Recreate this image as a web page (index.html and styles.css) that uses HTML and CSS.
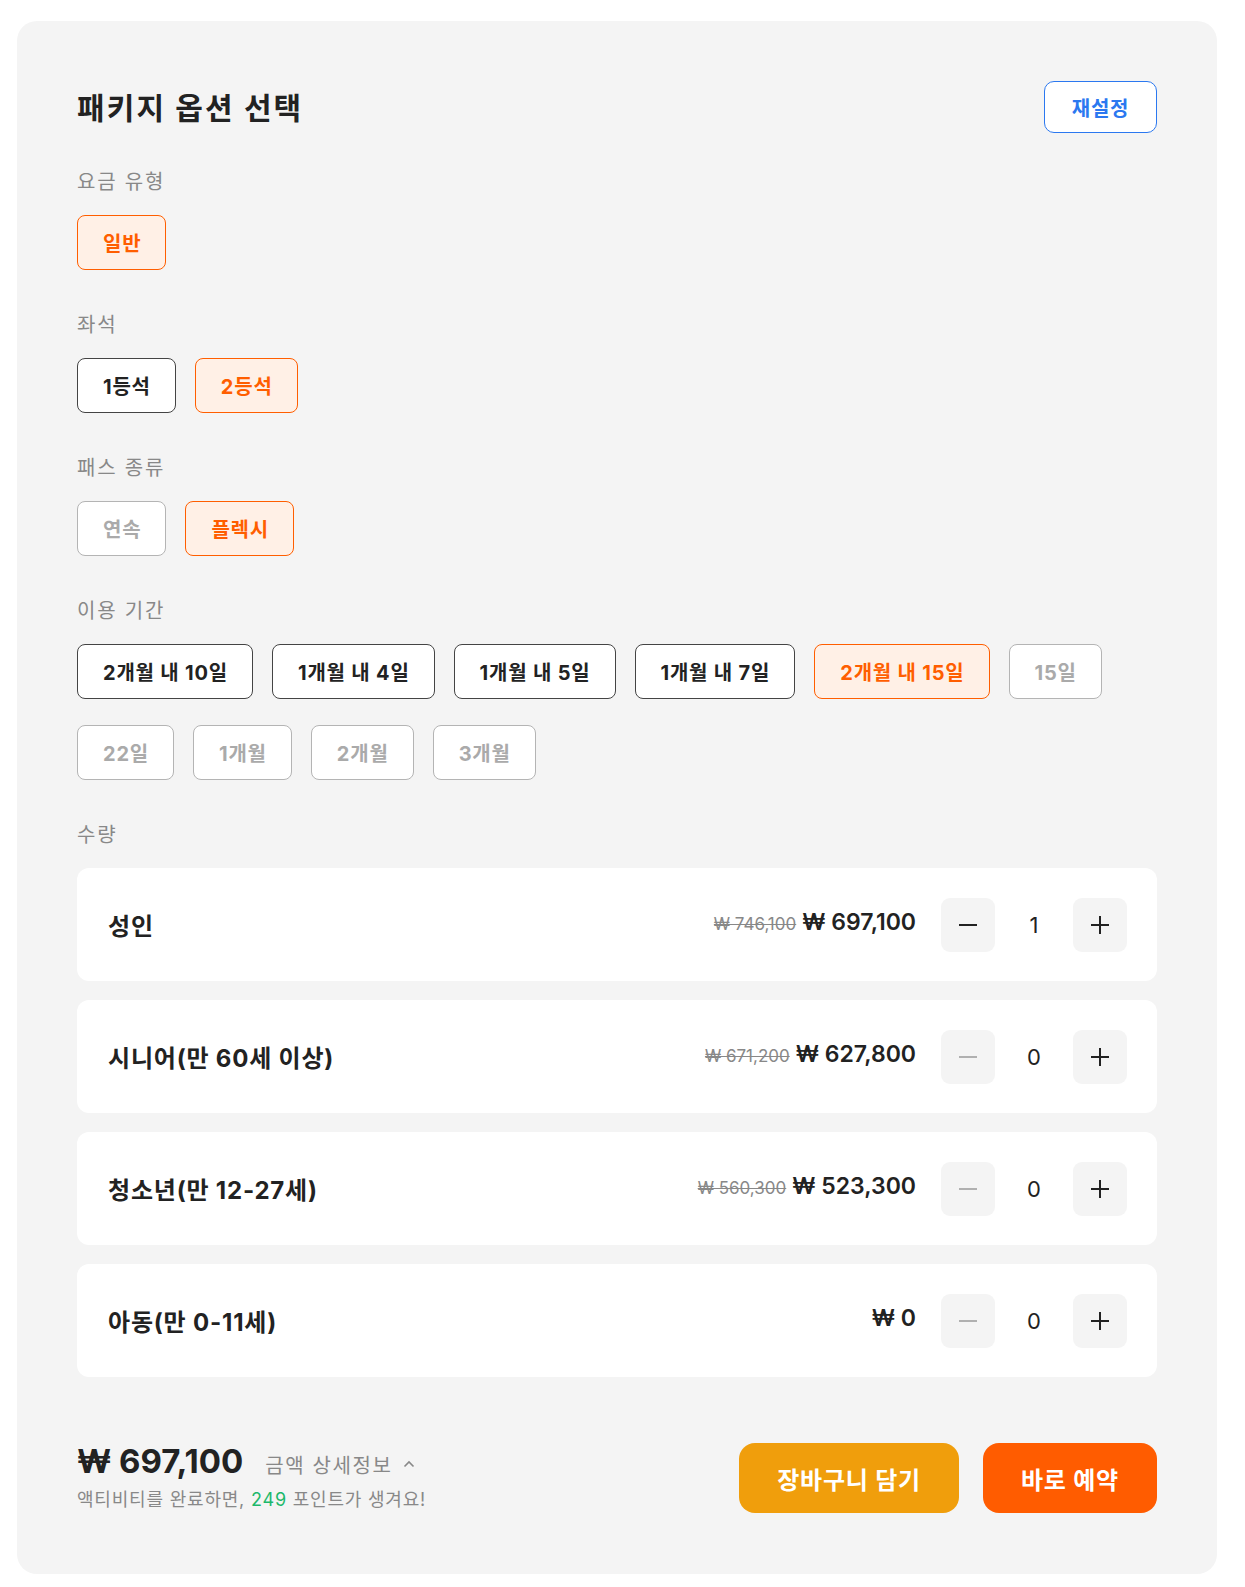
FILE: index.html
```html
<!DOCTYPE html>
<html lang="ko">
<head>
  <meta charset="UTF-8">
  <title>패키지 옵션 선택</title>
  <link rel="stylesheet" href="styles.css">
</head>
<body>
  <div class="panel">
    <div class="panel-head">
      <h2 class="panel-title">패키지 옵션 선택</h2>
      <button class="reset-btn">재설정</button>
    </div>

    <div class="option-group">
      <div class="option-label">요금 유형</div>
      <div class="option-list">
        <button class="chip is-active">일반</button>
      </div>
    </div>

    <div class="option-group">
      <div class="option-label">좌석</div>
      <div class="option-list">
        <button class="chip">1등석</button>
        <button class="chip is-active">2등석</button>
      </div>
    </div>

    <div class="option-group">
      <div class="option-label">패스 종류</div>
      <div class="option-list">
        <button class="chip is-disabled">연속</button>
        <button class="chip is-active">플렉시</button>
      </div>
    </div>

    <div class="option-group">
      <div class="option-label">이용 기간</div>
      <div class="option-list">
        <button class="chip">2개월 내 10일</button>
        <button class="chip">1개월 내 4일</button>
        <button class="chip">1개월 내 5일</button>
        <button class="chip">1개월 내 7일</button>
        <button class="chip is-active">2개월 내 15일</button>
        <button class="chip is-disabled">15일</button>
        <button class="chip is-disabled">22일</button>
        <button class="chip is-disabled">1개월</button>
        <button class="chip is-disabled">2개월</button>
        <button class="chip is-disabled">3개월</button>
      </div>
    </div>

    <div class="option-group">
      <div class="option-label">수량</div>
      <div class="qty-list">
        <div class="qty-row">
          <div class="qty-name">성인</div>
          <div class="qty-price">
            <span class="price-old">₩ 746,100</span>
            <span class="price-now">₩ 697,100</span>
          </div>
          <div class="stepper">
            <button class="step-btn"><span class="minus"></span></button>
            <span class="step-count">1</span>
            <button class="step-btn"><span class="plus"></span></button>
          </div>
        </div>
        <div class="qty-row">
          <div class="qty-name">시니어(만 60세 이상)</div>
          <div class="qty-price">
            <span class="price-old">₩ 671,200</span>
            <span class="price-now">₩ 627,800</span>
          </div>
          <div class="stepper">
            <button class="step-btn is-off"><span class="minus"></span></button>
            <span class="step-count">0</span>
            <button class="step-btn"><span class="plus"></span></button>
          </div>
        </div>
        <div class="qty-row">
          <div class="qty-name">청소년(만 12-27세)</div>
          <div class="qty-price">
            <span class="price-old">₩ 560,300</span>
            <span class="price-now">₩ 523,300</span>
          </div>
          <div class="stepper">
            <button class="step-btn is-off"><span class="minus"></span></button>
            <span class="step-count">0</span>
            <button class="step-btn"><span class="plus"></span></button>
          </div>
        </div>
        <div class="qty-row">
          <div class="qty-name">아동(만 0-11세)</div>
          <div class="qty-price">
            <span class="price-now">₩ 0</span>
          </div>
          <div class="stepper">
            <button class="step-btn is-off"><span class="minus"></span></button>
            <span class="step-count">0</span>
            <button class="step-btn"><span class="plus"></span></button>
          </div>
        </div>
      </div>
    </div>

    <div class="panel-foot">
      <div class="total">
        <div class="total-line">
          <span class="total-price">₩ 697,100</span>
          <span class="total-detail">금액 상세정보
            <svg class="chevron" viewBox="0 0 14 14" fill="none" stroke="currentColor" stroke-width="1.6">
              <path d="M2.5 9.5L7 5l4.5 4.5"/>
            </svg>
          </span>
        </div>
        <div class="total-note">액티비티를 완료하면, <span class="point">249</span> 포인트가 생겨요!</div>
      </div>
      <div class="actions">
        <button class="cart-btn">장바구니 담기</button>
        <button class="book-btn">바로 예약</button>
      </div>
    </div>
  </div>
</body>
</html>
```

FILE: styles.css
```css
body {
  margin: 0;
  padding: 21px 0 14px 17px;
  background: #fff;
  font-family: "Inter", "Noto Sans CJK KR", sans-serif;
  color: #222;
  letter-spacing: 0.05em;
}
button {
  font-family: inherit;
  letter-spacing: inherit;
  cursor: pointer;
}
.panel {
  width: 1200px;
  box-sizing: border-box;
  padding: 60px 60px 61px;
  background: #f4f4f4;
  border-radius: 20px;
}
.panel-head {
  display: flex;
  justify-content: space-between;
  align-items: center;
  margin-bottom: 34px;
}
.panel-title {
  margin: 0;
  margin-top: -2px;
  font-size: 30px;
  font-weight: 700;
  letter-spacing: 0.07em;
  color: #222;
}
.reset-btn {
  width: 113px;
  height: 52px;
  background: #fff;
  border: 1px solid #2b78f0;
  border-radius: 10px;
  color: #2b78f0;
  font-size: 20px;
  font-weight: 700;
}
.option-group {
  margin-bottom: 40px;
}
.option-label {
  font-size: 20px;
  line-height: 30px;
  letter-spacing: 0.09em;
  color: #888;
  margin-bottom: 18px;
}
.option-list {
  display: flex;
  flex-wrap: wrap;
  gap: 26px 19px;
}
.chip {
  height: 55px;
  padding: 0 24px 0 25px;
  background: #fff;
  border: 1px solid #444;
  border-radius: 8px;
  font-size: 20px;
  font-weight: 700;
  color: #222;
}
.chip.is-active {
  background: #fff0e6;
  border-color: #ff5e00;
  color: #ff5e00;
}
.chip.is-disabled {
  border-color: #b4b4b4;
  color: #aaa;
}
.qty-list {
  display: flex;
  flex-direction: column;
  gap: 19px;
}
.qty-row {
  display: flex;
  align-items: center;
  height: 113px;
  padding: 0 30px 0 31px;
  background: #fff;
  border-radius: 12px;
}
.qty-name {
  flex: 1;
  font-size: 24px;
  font-weight: 700;
  color: #222;
}
.qty-price {
  display: flex;
  align-items: baseline;
  gap: 6px;
  margin-right: 25px;
  margin-top: -6px;
  letter-spacing: 0;
}
.price-old {
  font-size: 17px;
  color: #888;
  text-decoration: line-through;
}
.price-now {
  font-size: 23px;
  font-weight: 600;
  color: #222;
}
.stepper {
  display: flex;
  align-items: center;
}
.step-btn {
  width: 54px;
  height: 54px;
  display: flex;
  align-items: center;
  justify-content: center;
  padding: 0;
  background: #f4f4f4;
  border: none;
  border-radius: 9px;
  color: #222;
}
.step-btn.is-off {
  color: #b0b0b0;
}
.minus {
  width: 18px;
  height: 2px;
  background: currentColor;
}
.plus {
  position: relative;
  width: 18px;
  height: 2px;
  background: currentColor;
}
.plus::after {
  content: "";
  position: absolute;
  left: 8px;
  top: -8px;
  width: 2px;
  height: 18px;
  background: currentColor;
}
.step-count {
  width: 78px;
  text-align: center;
  font-size: 22px;
  letter-spacing: 0;
  color: #222;
}
.panel-foot {
  display: flex;
  justify-content: space-between;
  align-items: flex-end;
  margin-top: 62px;
}
.total-line {
  display: flex;
  align-items: center;
  gap: 22px;
}
.total-price {
  font-size: 33px;
  font-weight: 700;
  letter-spacing: 0;
  color: #222;
  line-height: 44px;
}
.total-detail {
  display: flex;
  align-items: center;
  gap: 10px;
  font-size: 20px;
  letter-spacing: 0.08em;
  color: #888;
  margin-top: 6px;
}
.chevron {
  width: 14px;
  height: 14px;
}
.total-note {
  margin-top: 4px;
  font-size: 18px;
  line-height: 26px;
  color: #888;
}
.point {
  color: #1db86b;
}
.actions {
  display: flex;
  gap: 24px;
}
.cart-btn,
.book-btn {
  height: 70px;
  padding: 0 38px;
  border: none;
  border-radius: 16px;
  color: #fff;
  font-size: 24px;
  font-weight: 700;
}
.cart-btn {
  background: #f09e0c;
}
.book-btn {
  background: #ff5c00;
}
```
